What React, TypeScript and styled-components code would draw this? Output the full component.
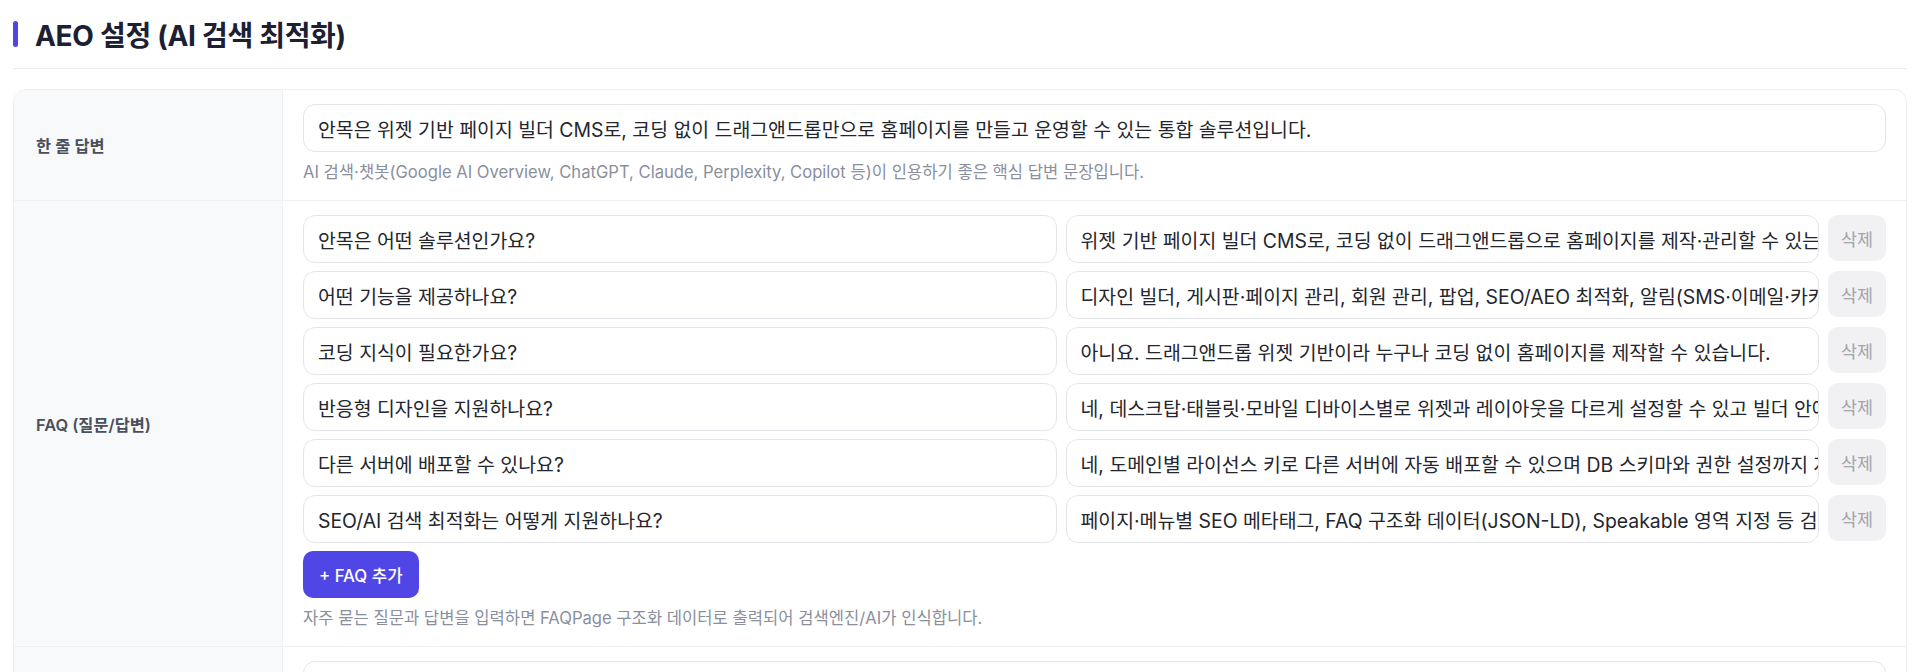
import React from 'react';
import styled, { createGlobalStyle } from 'styled-components';

const GlobalStyle = createGlobalStyle`
    * {
        box-sizing: border-box;
    }
    body {
        margin: 0;
        background: #ffffff;
        font-family: Inter, "Noto Sans CJK KR", "Noto Sans", sans-serif;
        color: #222531;
    }
`;

const Page = styled.div`
    padding: 0 13px;
`;

const Header = styled.div`
    display: flex;
    align-items: center;
    gap: 17px;
    height: 69px;
    border-bottom: 1px solid #eaecf0;
`;

const TitleBar = styled.span`
    width: 5px;
    height: 26px;
    border-radius: 3px;
    background: #4f46e5;
`;

const Title = styled.h2`
    margin: 0;
    font-size: 28px;
    font-weight: 700;
    letter-spacing: -0.3px;
    color: #1c2033;
`;

const Panel = styled.div`
    margin-top: 20px;
    border: 1px solid #eceef2;
    border-radius: 13px;
    overflow: hidden;
`;

const Row = styled.div`
    display: grid;
    grid-template-columns: 269px 1fr;
    & + & {
        border-top: 1px solid #eef0f3;
    }
`;

const Label = styled.div`
    display: flex;
    align-items: center;
    padding: 0 22px;
    background: #f8f9fb;
    border-right: 1px solid #eef0f3;
    font-size: 16.4px;
    font-weight: 600;
    color: #4a4f5d;
`;

const Content = styled.div`
    display: flex;
    flex-direction: column;
    padding: 14px 20px 15px;
    min-width: 0;
`;

const Field = styled.div<{ $grow?: boolean }>`
    flex: ${props => (props.$grow ? '1 1 0' : 'none')};
    min-width: 0;
    height: 48px;
    display: flex;
    align-items: center;
    padding: 0 14px;
    border: 1px solid #e3e5ea;
    border-radius: 12px;
    background: #ffffff;
    font-size: 19.4px;
    color: #24262d;
    white-space: nowrap;
    overflow: hidden;
`;

const Hint = styled.p`
    margin: 8px 0 0;
    font-size: 16.6px;
    line-height: 25px;
    color: #8a8f9e;
`;

const FaqList = styled.div`
    display: flex;
    flex-direction: column;
    gap: 8px;
`;

const FaqRow = styled.div`
    display: flex;
    align-items: flex-start;
    gap: 9px;
`;

const DeleteButton = styled.button`
    flex: none;
    height: 46px;
    padding: 0 13px;
    border: none;
    border-radius: 10px;
    background: #f1f1f3;
    color: #a1a5ad;
    font-family: inherit;
    font-size: 17.4px;
`;

const AddButton = styled.button`
    align-self: flex-start;
    margin-top: 8px;
    height: 47px;
    padding: 0 16px;
    border: none;
    border-radius: 10px;
    background: #4f46e5;
    color: #ffffff;
    font-family: inherit;
    font-size: 16.8px;
    font-weight: 500;
`;

interface Faq {
    question: string;
    answer: string;
}

const FAQS: Faq[] = [
    {
        question: '안목은 어떤 솔루션인가요?',
        answer: '위젯 기반 페이지 빌더 CMS로, 코딩 없이 드래그앤드롭으로 홈페이지를 제작·관리할 수 있는 통합 솔루션입니다.',
    },
    {
        question: '어떤 기능을 제공하나요?',
        answer: '디자인 빌더, 게시판·페이지 관리, 회원 관리, 팝업, SEO/AEO 최적화, 알림(SMS·이메일·카카오톡) 등을 제공합니다.',
    },
    {
        question: '코딩 지식이 필요한가요?',
        answer: '아니요. 드래그앤드롭 위젯 기반이라 누구나 코딩 없이 홈페이지를 제작할 수 있습니다.',
    },
    {
        question: '반응형 디자인을 지원하나요?',
        answer: '네, 데스크탑·태블릿·모바일 디바이스별로 위젯과 레이아웃을 다르게 설정할 수 있고 빌더 안에서 미리보기도 지원합니다.',
    },
    {
        question: '다른 서버에 배포할 수 있나요?',
        answer: '네, 도메인별 라이선스 키로 다른 서버에 자동 배포할 수 있으며 DB 스키마와 권한 설정까지 자동으로 구성됩니다.',
    },
    {
        question: 'SEO/AI 검색 최적화는 어떻게 지원하나요?',
        answer: '페이지·메뉴별 SEO 메타태그, FAQ 구조화 데이터(JSON-LD), Speakable 영역 지정 등 검색 최적화를 지원합니다.',
    },
];

const App: React.FunctionComponent = () => {
    return (
        <Page>
            <GlobalStyle />
            <Header>
                <TitleBar />
                <Title>AEO 설정 (AI 검색 최적화)</Title>
            </Header>
            <Panel>
                <Row>
                    <Label>한 줄 답변</Label>
                    <Content>
                        <Field>안목은 위젯 기반 페이지 빌더 CMS로, 코딩 없이 드래그앤드롭만으로 홈페이지를 만들고 운영할 수 있는 통합 솔루션입니다.</Field>
                        <Hint>AI 검색·챗봇(Google AI Overview, ChatGPT, Claude, Perplexity, Copilot 등)이 인용하기 좋은 핵심 답변 문장입니다.</Hint>
                    </Content>
                </Row>
                <Row>
                    <Label>FAQ (질문/답변)</Label>
                    <Content>
                        <FaqList>
                            {FAQS.map(faq => (
                                <FaqRow key={faq.question}>
                                    <Field $grow>{faq.question}</Field>
                                    <Field $grow>{faq.answer}</Field>
                                    <DeleteButton>삭제</DeleteButton>
                                </FaqRow>
                            ))}
                        </FaqList>
                        <AddButton>+ FAQ 추가</AddButton>
                        <Hint>자주 묻는 질문과 답변을 입력하면 FAQPage 구조화 데이터로 출력되어 검색엔진/AI가 인식합니다.</Hint>
                    </Content>
                </Row>
                <Row>
                    <Label>Speakable 영역</Label>
                    <Content>
                        <Field>.page-summary, .faq-answer</Field>
                        <Hint>음성 검색·AI 어시스턴트가 읽어줄 영역의 CSS 선택자를 입력합니다.</Hint>
                    </Content>
                </Row>
            </Panel>
        </Page>
    );
};

export default App;
